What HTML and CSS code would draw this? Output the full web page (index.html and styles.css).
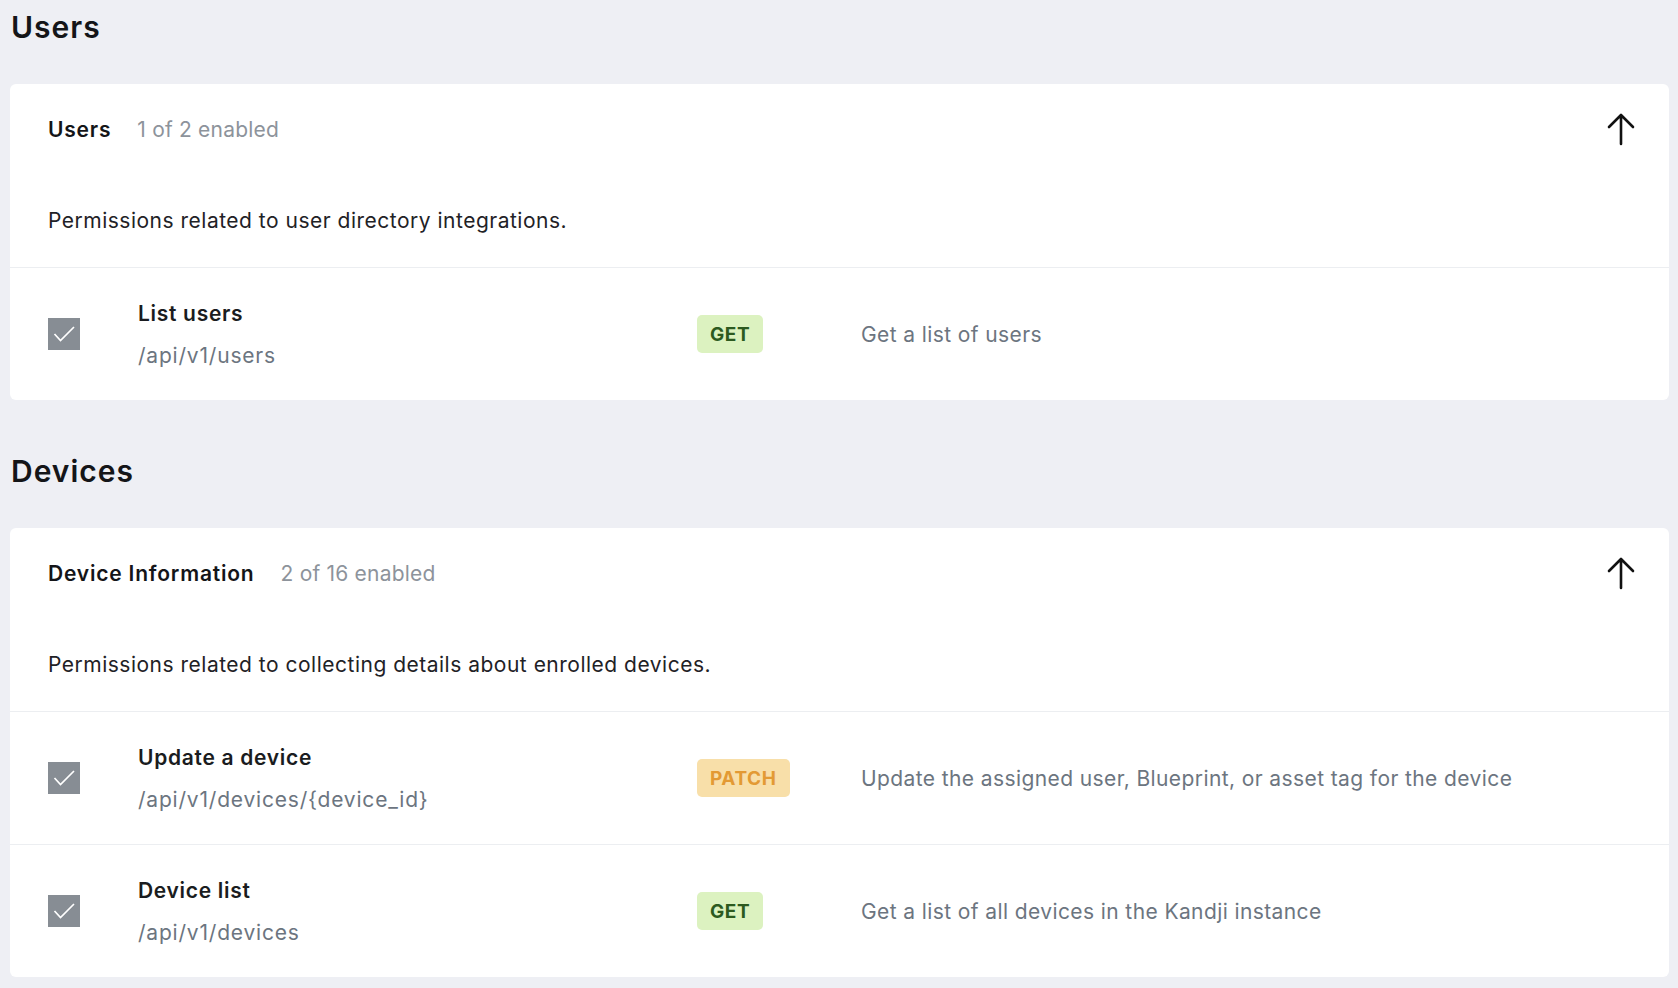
FILE: index.html
```html
<!DOCTYPE html>
<html>
<head>
<meta charset="utf-8">
<link rel="stylesheet" href="styles.css">
</head>
<body>
<div class="page">
  <section class="section">
    <h2 class="section-title">Users</h2>
    <div class="card">
      <div class="card-head">
        <div class="card-title-row">
          <span class="card-title">Users</span>
          <span class="card-count">1 of 2 enabled</span>
        </div>
        <svg class="arrow" width="32" height="36" viewBox="0 0 32 36"><path d="M16 33 V4 M4 16 L16 4 L28 16" fill="none" stroke="#111" stroke-width="2.6" stroke-linecap="round" stroke-linejoin="round"/></svg>
      </div>
      <p class="card-desc">Permissions related to user directory integrations.</p>
      <div class="row">
        <span class="check"><svg width="32" height="32" viewBox="0 0 32 32"><path d="M6.5 16 L12.5 22.5 L26 9" fill="none" stroke="#fff" stroke-width="1.7"/></svg></span>
        <div class="endpoint">
          <div class="ep-name">List users</div>
          <div class="ep-path">/api/v1/users</div>
        </div>
        <div class="method-cell"><span class="badge get">GET</span></div>
        <div class="ep-desc">Get a list of users</div>
      </div>
    </div>
  </section>
  <section class="section">
    <h2 class="section-title">Devices</h2>
    <div class="card">
      <div class="card-head">
        <div class="card-title-row">
          <span class="card-title">Device Information</span>
          <span class="card-count">2 of 16 enabled</span>
        </div>
        <svg class="arrow" width="32" height="36" viewBox="0 0 32 36"><path d="M16 33 V4 M4 16 L16 4 L28 16" fill="none" stroke="#111" stroke-width="2.6" stroke-linecap="round" stroke-linejoin="round"/></svg>
      </div>
      <p class="card-desc">Permissions related to collecting details about enrolled devices.</p>
      <div class="row">
        <span class="check"><svg width="32" height="32" viewBox="0 0 32 32"><path d="M6.5 16 L12.5 22.5 L26 9" fill="none" stroke="#fff" stroke-width="1.7"/></svg></span>
        <div class="endpoint">
          <div class="ep-name">Update a device</div>
          <div class="ep-path">/api/v1/devices/{device_id}</div>
        </div>
        <div class="method-cell"><span class="badge patch">PATCH</span></div>
        <div class="ep-desc">Update the assigned user, Blueprint, or asset tag for the device</div>
      </div>
      <div class="row">
        <span class="check"><svg width="32" height="32" viewBox="0 0 32 32"><path d="M6.5 16 L12.5 22.5 L26 9" fill="none" stroke="#fff" stroke-width="1.7"/></svg></span>
        <div class="endpoint">
          <div class="ep-name">Device list</div>
          <div class="ep-path">/api/v1/devices</div>
        </div>
        <div class="method-cell"><span class="badge get">GET</span></div>
        <div class="ep-desc">Get a list of all devices in the Kandji instance</div>
      </div>
    </div>
  </section>
</div>
</body>
</html>
```
FILE: styles.css
```css
* { box-sizing: border-box; }
html, body { margin: 0; padding: 0; }
body {
  background: #eeeff4;
  font-family: Inter, "Noto Sans", sans-serif;
  color: #1a1c20;
  overflow: hidden;
}
.page {
  padding: 9px 9px 0 10px;
  display: flex;
  flex-direction: column;
  gap: 53px;
}
.section-title {
  margin: 0 0 39px 1px;
  font-size: 30px;
  line-height: 36px;
  font-weight: 600;
  letter-spacing: 1px;
  color: #141518;
}
.card {
  background: #fff;
  border-radius: 6px;
}
.card-head {
  display: flex;
  align-items: center;
  justify-content: space-between;
  padding: 30px 32px 0 38px;
  height: 32px;
  box-sizing: content-box;
}
.card-title-row {
  display: flex;
  align-items: baseline;
  gap: 26px;
  margin-top: -2px;
}
.card-title {
  font-size: 21px;
  font-weight: 600;
  letter-spacing: 0.8px;
  color: #141518;
}
.card-count {
  font-size: 21px;
  letter-spacing: 0.2px;
  color: #8d939b;
}
.arrow { display: block; margin-top: -2px; }
.card-desc {
  margin: 0;
  padding: 60px 38px 31px 38px;
  font-size: 21px;
  line-height: 30px;
  letter-spacing: 0.5px;
  color: #1f2226;
}
.row {
  display: grid;
  grid-template-columns: 91px 559px 164px 1fr;
  align-items: center;
  padding: 0 38px 0 37px;
  height: 133px;
  border-top: 1px solid #eceef1;
}
.check {
  width: 32px;
  height: 32px;
  margin-left: 1px;
  background: #878d94;
  display: block;
}
.check svg { display: block; }
.endpoint {
  display: flex;
  flex-direction: column;
  gap: 12px;
  padding-top: 2px;
}
.ep-name {
  font-size: 21px;
  line-height: 30px;
  font-weight: 600;
  letter-spacing: 0.7px;
  color: #1a1c20;
}
.ep-path {
  font-size: 21px;
  line-height: 30px;
  letter-spacing: 0.8px;
  color: #6c7580;
}
.badge {
  display: inline-flex;
  align-items: center;
  height: 38px;
  padding: 0 13px;
  border-radius: 5px;
  font-size: 19px;
  font-weight: 700;
  letter-spacing: 0.6px;
}
.badge.get { background: #dcf2c0; color: #2c5a1f; }
.badge.patch { background: #f8dfa9; color: #e39a34; }
.ep-desc {
  font-size: 21px;
  letter-spacing: 0.4px;
  color: #6c7580;
}
```
